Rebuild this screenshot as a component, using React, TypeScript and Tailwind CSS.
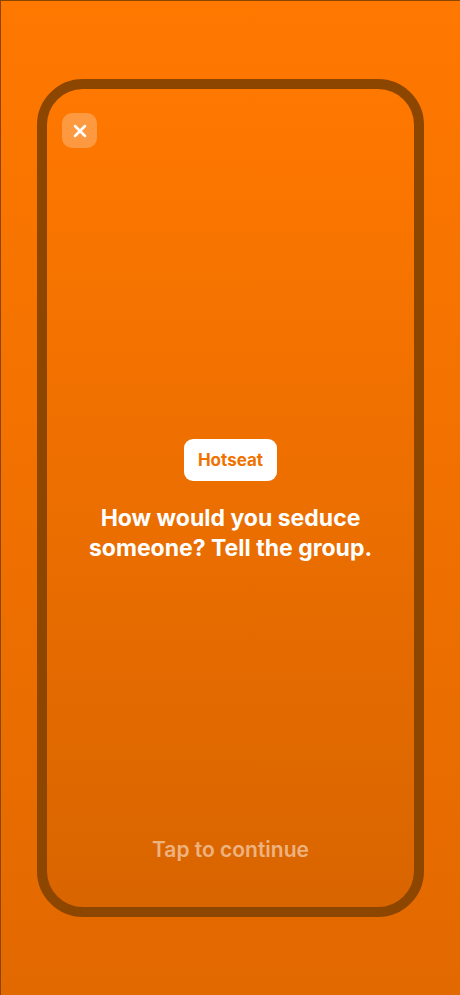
import React from "react";
import { X } from "lucide-react";

export default function App() {
    return (
        <div
            className="h-[995px] w-full flex flex-col border-l border-t border-[#8a4500] bg-gradient-to-b from-[#ff7800] to-[#e26900] px-[36px] py-[78px]"
            style={{ fontFamily: "Inter, 'Noto Sans', sans-serif" }}
        >
            <div className="flex-1 flex flex-col rounded-[46px] border-[10px] border-[#8c4600] bg-gradient-to-b from-[#ff7800] to-[#d96500] px-[15px] pt-[24px] pb-[42px]">
                <div className="flex">
                    <button className="w-[35px] h-[35px] rounded-[10px] bg-white/25 flex items-center justify-center text-white">
                        <X size={20} strokeWidth={3} />
                    </button>
                </div>

                <div className="flex-1 flex flex-col items-center justify-center pt-[20px]">
                    <span className="rounded-[9px] bg-white px-[14px] py-[9px] text-[17px] font-bold leading-[24px] text-[#f07200]">
                        Hotseat
                    </span>
                    <p className="mt-[22px] text-center text-[23px] font-bold leading-[30px] text-white">
                        How would you seduce
                        <br />
                        someone? Tell the group.
                    </p>
                </div>

                <div className="text-center text-[21px] font-semibold text-white/50">
                    Tap to continue
                </div>
            </div>
        </div>
    );
}
